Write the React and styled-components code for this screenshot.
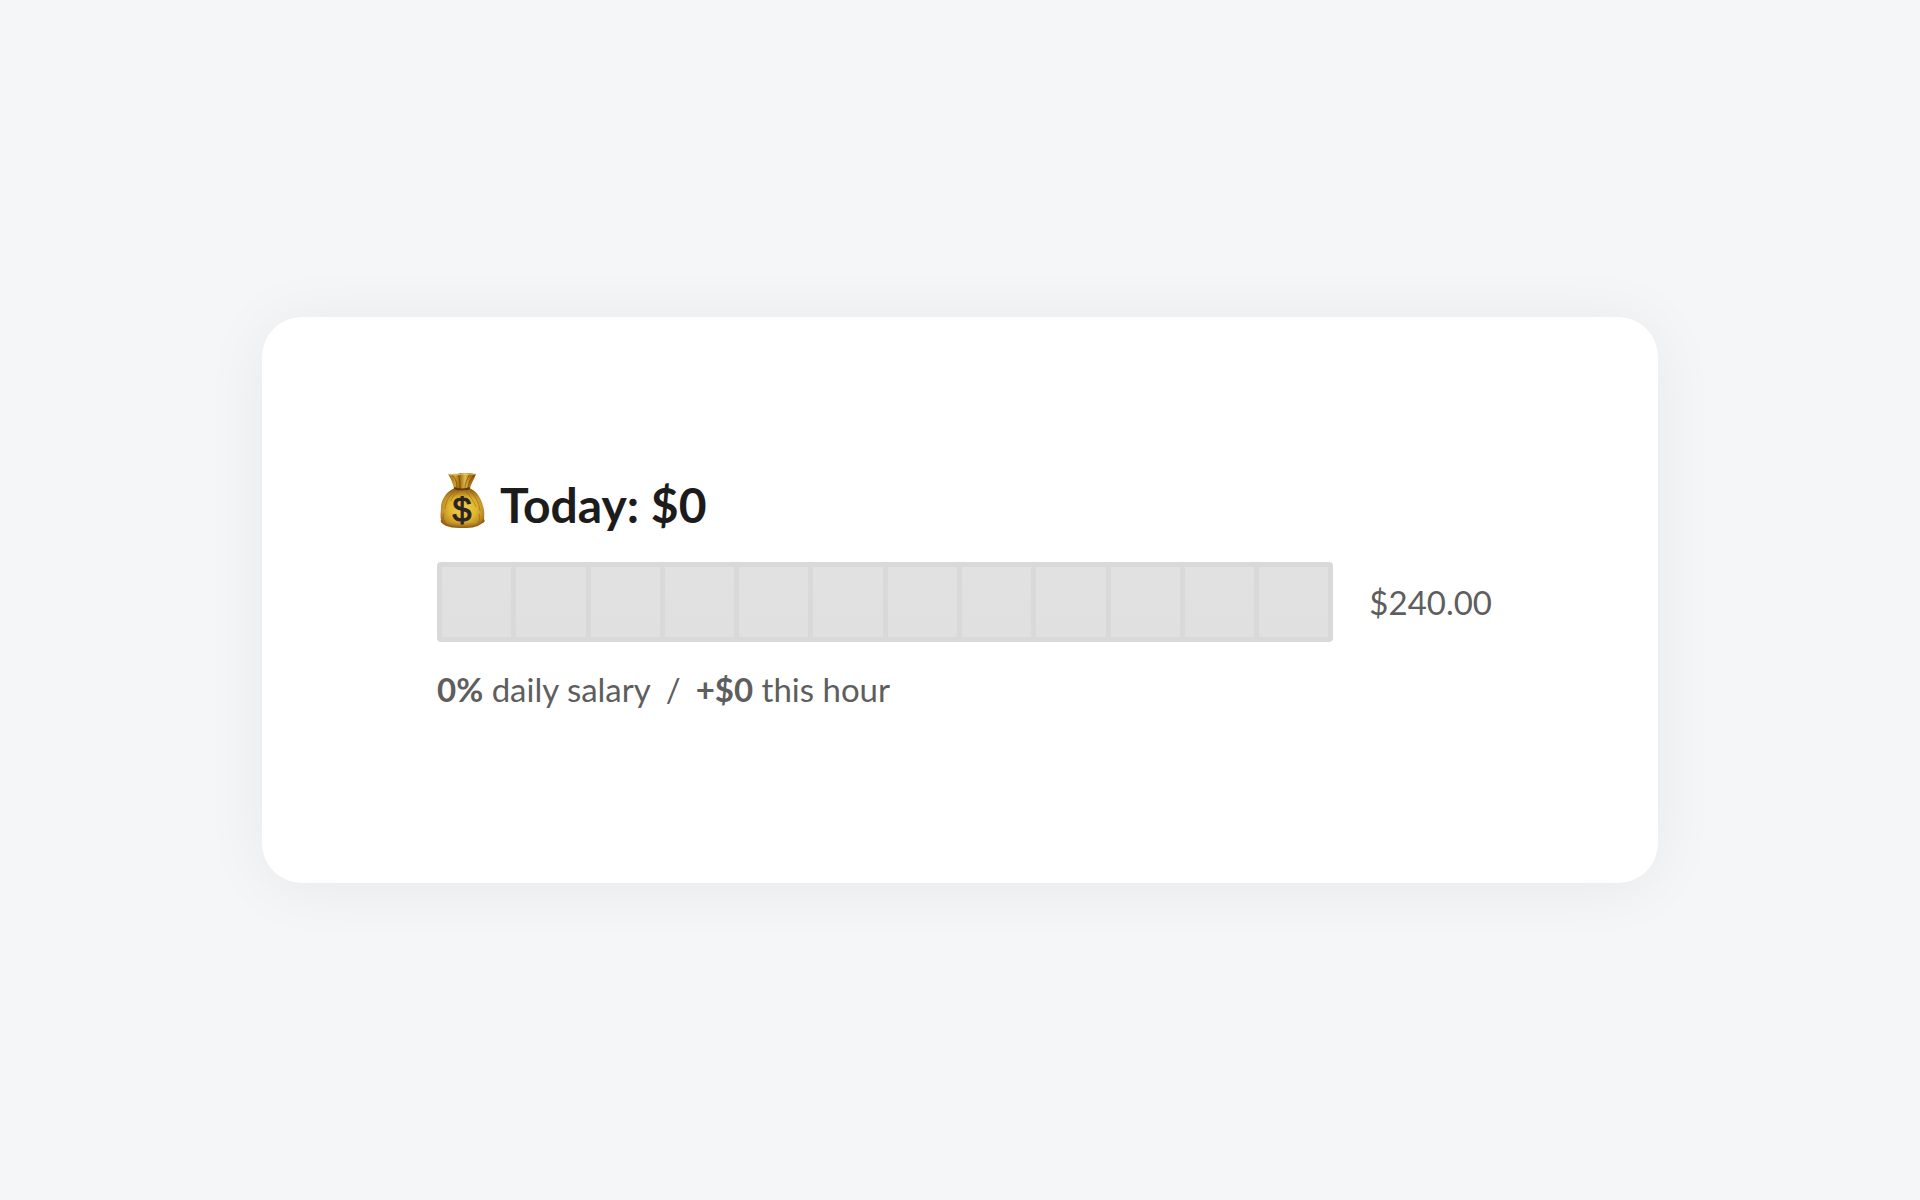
import React from "react";
import styled, { createGlobalStyle } from "styled-components";

const HOURS = 12;

function MoneyBag() {
  return (
    <BagIcon viewBox="0 2 50 56" role="img" aria-label="Money bag">
      <defs>
        <radialGradient id="bagBody" cx="0.5" cy="0.5" r="0.62">
          <stop offset="0" stopColor="#f0d04a" />
          <stop offset="0.5" stopColor="#e0b632" />
          <stop offset="0.78" stopColor="#bf8d26" />
          <stop offset="1" stopColor="#7d4a0b" />
        </radialGradient>
        <linearGradient id="bagNeck" x1="0" y1="0" x2="1" y2="0">
          <stop offset="0" stopColor="#8c5d10" />
          <stop offset="0.25" stopColor="#cf9f2a" />
          <stop offset="0.42" stopColor="#a06b12" />
          <stop offset="0.62" stopColor="#e3bd48" />
          <stop offset="0.78" stopColor="#b07a18" />
          <stop offset="1" stopColor="#8a4d10" />
        </linearGradient>
        <linearGradient id="bagShade" x1="0" y1="0" x2="0" y2="1">
          <stop offset="0" stopColor="#6e3f08" stopOpacity="0.5" />
          <stop offset="0.25" stopColor="#8a5b10" stopOpacity="0" />
          <stop offset="0.85" stopColor="#8a5b10" stopOpacity="0" />
          <stop offset="1" stopColor="#6a3d08" stopOpacity="0.6" />
        </linearGradient>
      </defs>
      <path
        d="M16 18 C10 21 5 27 4 35 C4 41 3 44 4 49 C3 51 5 52 6 53 C10 56 17 57 26 57 C34 57 40 56 44 53 C46 52 49 51 47 48 C47 45 48 41 46 35 C44 27 40 21 34 18 Z"
        fill="url(#bagBody)"
      />
      <path
        d="M16 18 C10 21 5 27 4 35 C4 41 3 44 4 49 C3 51 5 52 6 53 C10 56 17 57 26 57 C34 57 40 56 44 53 C46 52 49 51 47 48 C47 45 48 41 46 35 C44 27 40 21 34 18 Z"
        fill="url(#bagShade)"
      />
      <path
        d="M18 20 C13 24 9 29 8 38 M22 20 C18 23 15 26 14 30 M28 19 C32 24 37 30 39 36 M33 20 C38 25 42 31 43 40 M7 42 C6 46 6 48 8 51 M42 43 C43 46 43 49 41 52"
        fill="none"
        stroke="#8c5a0e"
        strokeWidth="1"
        opacity="0.5"
      />
      <path
        d="M11 3 C14 4 17 2 20 3 C24 1 30 2 34 2 C36 3 38 3 39 3 C38 7 34 12 33 18 C29 20 21 20 17 18 C16 12 14 8 11 3 Z"
        fill="url(#bagNeck)"
      />
      <path
        d="M15 4 C19 8 20 12 20 17 M21 3 C23 8 23 12 23 18 M33 3 C30 8 28 12 28 18 M37 4 C33 9 31 13 31 18"
        fill="none"
        stroke="#754309"
        strokeWidth="1"
        opacity="0.7"
      />
      <path
        d="M11 3 C14 5 17 3 20 4 C24 2 30 4 34 3 L39 3"
        fill="none"
        stroke="#e6cb80"
        strokeWidth="1"
      />
      <path
        d="M17 17 C21 19 29 19 33 17"
        fill="none"
        stroke="#643706"
        strokeWidth="2"
      />
      <BagSign x="25" y="50" textAnchor="middle">
        $
      </BagSign>
    </BagIcon>
  );
}

function App() {
  return (
    <>
      <GlobalStyle />
      <Page>
        <Card>
          <Title>
            <MoneyBag />
            Today: $0
          </Title>
          <BarRow>
            <Bar role="progressbar" aria-label="Daily salary" aria-valuenow={0}>
              {Array.from({ length: HOURS }, (_, hour) => (
                <Segment key={hour} />
              ))}
            </Bar>
            <Total>$240.00</Total>
          </BarRow>
          <Summary>
            <span>
              <strong>0%</strong> daily salary
            </span>
            <span>/</span>
            <span>
              <strong>+$0</strong> this hour
            </span>
          </Summary>
        </Card>
      </Page>
    </>
  );
}

// ==========================
// ==== STYLED COMPONENT ====
// ==========================
const GlobalStyle = createGlobalStyle`
  * {
    box-sizing: border-box;
  }

  body {
    margin: 0;
    background-color: #f4f6f8;
    font-family: "Lato", sans-serif;
  }
`;

const Page = styled.main`
  display: flex;
  align-items: center;
  justify-content: center;
  min-height: 100vh;
  padding: 48px;
`;

const Card = styled.section`
  width: 100%;
  max-width: 1396px;
  padding: 156px 166px 174px 175px;
  border-radius: 40px;
  background-color: #fff;
  box-shadow: 0 4px 64px rgba(0, 0, 0, 0.06);
`;

const Title = styled.h1`
  display: flex;
  align-items: flex-start;
  gap: 13px;
  margin: 0 0 25px;
  color: #1c1c1c;
  font-size: 48px;
  font-weight: 700;
  line-height: 64px;
`;

const BagIcon = styled.svg`
  width: 50px;
  height: 56px;
`;

const BagSign = styled.text`
  fill: #2a2422;
  stroke: #2a2422;
  stroke-width: 1px;
  font-family: "Liberation Sans", sans-serif;
  font-size: 34px;
  font-weight: 400;
`;

const BarRow = styled.div`
  display: flex;
  align-items: center;
  gap: 36px;
`;

const Bar = styled.div`
  display: flex;
  flex: 1;
  gap: 5px;
  height: 80px;
  padding: 5px;
  border-radius: 4px;
  background-color: #d9d9d9;
`;

const Segment = styled.div`
  flex: 1;
  background: linear-gradient(#e1e1e1, #e0e0e0);
`;

const Total = styled.span`
  color: #5e5e5e;
  font-size: 33px;
  line-height: 40px;
`;

const Summary = styled.p`
  display: flex;
  gap: 15px;
  margin: 27px 0 0;
  color: #5e5e5e;
  font-size: 33px;
  line-height: 40px;
`;

export default App;
